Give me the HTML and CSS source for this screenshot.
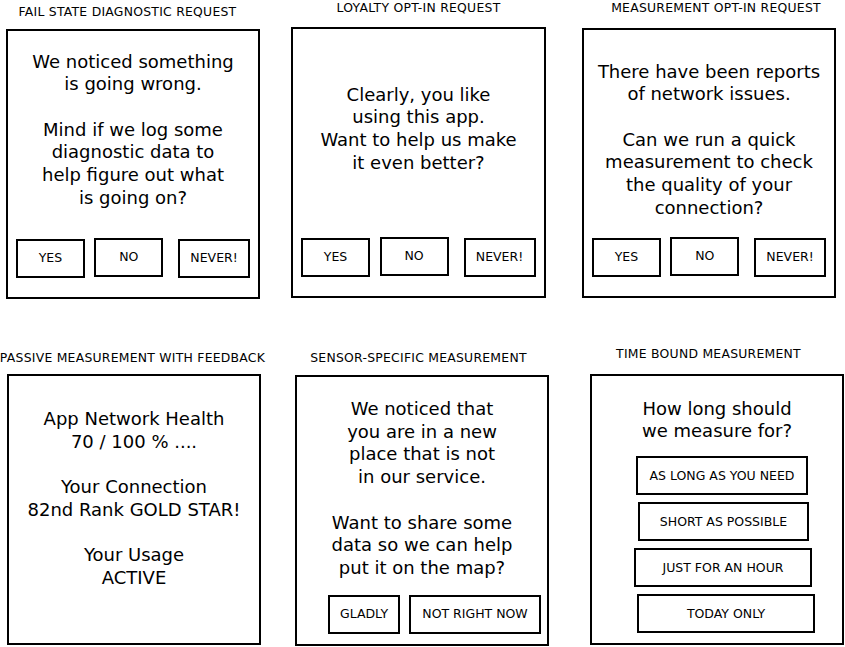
FILE: index.html
```html
<!DOCTYPE html>
<html lang="en">
<head>
    <meta charset="UTF-8">
    <meta name="viewport" content="width=device-width, initial-scale=1.0">
    <title>Opt-in request wireframes</title>
    <link rel="stylesheet" href="styles.css">
</head>
<body>
    <main class="board">
        <!-- Top row -->
        <section class="panel panel-fail">
            <h2 class="panel-title">FAIL STATE DIAGNOSTIC REQUEST</h2>
            <div class="card">
                <div class="card-text">
                    <p>We noticed something<br>is going wrong.</p>
                    <p>Mind if we log some<br>diagnostic data to<br>help figure out what<br>is going on?</p>
                </div>
                <div class="actions">
                    <button class="btn btn-yes">YES</button>
                    <button class="btn btn-no">NO</button>
                    <button class="btn btn-never">NEVER!</button>
                </div>
            </div>
        </section>

        <section class="panel panel-loyalty">
            <h2 class="panel-title">LOYALTY OPT-IN REQUEST</h2>
            <div class="card">
                <div class="card-text">
                    <p>Clearly, you like<br>using this app.<br>Want to help us make<br>it even better?</p>
                </div>
                <div class="actions">
                    <button class="btn btn-yes">YES</button>
                    <button class="btn btn-no">NO</button>
                    <button class="btn btn-never">NEVER!</button>
                </div>
            </div>
        </section>

        <section class="panel panel-measure">
            <h2 class="panel-title">MEASUREMENT OPT-IN REQUEST</h2>
            <div class="card">
                <div class="card-text">
                    <p>There have been reports<br>of network issues.</p>
                    <p>Can we run a quick<br>measurement to check<br>the quality of your<br>connection?</p>
                </div>
                <div class="actions">
                    <button class="btn btn-yes">YES</button>
                    <button class="btn btn-no">NO</button>
                    <button class="btn btn-never">NEVER!</button>
                </div>
            </div>
        </section>

        <!-- Bottom row -->
        <section class="panel panel-passive">
            <h2 class="panel-title">PASSIVE MEASUREMENT WITH FEEDBACK</h2>
            <div class="card">
                <div class="card-text">
                    <p>App Network Health<br>70 / 100 % ....</p>
                    <p>Your Connection<br>82nd Rank GOLD STAR!</p>
                    <p>Your Usage<br>ACTIVE</p>
                </div>
            </div>
        </section>

        <section class="panel panel-sensor">
            <h2 class="panel-title">SENSOR-SPECIFIC MEASUREMENT</h2>
            <div class="card">
                <div class="card-text">
                    <p>We noticed that<br>you are in a new<br>place that is not<br>in our service.</p>
                    <p>Want to share some<br>data so we can help<br>put it on the map?</p>
                </div>
                <div class="actions">
                    <button class="btn btn-gladly">GLADLY</button>
                    <button class="btn btn-later">NOT RIGHT NOW</button>
                </div>
            </div>
        </section>

        <section class="panel panel-time">
            <h2 class="panel-title">TIME BOUND MEASUREMENT</h2>
            <div class="card">
                <div class="card-text">
                    <p>How long should<br>we measure for?</p>
                </div>
                <div class="choices">
                    <button class="btn choice-long">AS LONG AS YOU NEED</button>
                    <button class="btn choice-short">SHORT AS POSSIBLE</button>
                    <button class="btn choice-hour">JUST FOR AN HOUR</button>
                    <button class="btn choice-today">TODAY ONLY</button>
                </div>
            </div>
        </section>
    </main>
</body>
</html>
```

FILE: styles.css
```css
* {
    box-sizing: border-box;
    font-family: 'DejaVu Sans', Verdana, sans-serif;
}

body {
    margin: 0;
    background-color: white;
    color: #000;
}

/* free canvas: each panel sits where it was drawn */
.board {
    position: relative;
    width: 845px;
    height: 647px;
    overflow: hidden;
}

.panel {
    position: absolute;
    width: 254px;
}

.panel-fail     { left: 6px;   top: 5px; }
.panel-loyalty  { left: 291px; top: 1px; width: 255px; }
.panel-measure  { left: 582px; top: 1px; }
.panel-passive  { left: 7px;   top: 351px; }
.panel-sensor   { left: 295px; top: 351px; }
.panel-time     { left: 590px; top: 347px; }

.panel-title {
    display: flex;
    justify-content: center;
    margin: 0;
    height: 14px;
    font-size: 12.4px;
    font-weight: normal;
    line-height: 14px;
    letter-spacing: 0.25px;
    white-space: nowrap;
}

.panel-fail .panel-title    { padding-right: 11px; }
.panel-measure .panel-title { padding-left: 14px; }
.panel-passive .panel-title { padding-right: 3px; }
.panel-sensor .panel-title  { padding-right: 7px; }
.panel-time .panel-title    { padding-right: 17px; }

.card {
    display: flex;
    flex-direction: column;
    height: 270px;
    border: 2px solid #000;
    background-color: white;
}

.panel-fail .card    { margin-top: 10px; padding: 19.5px 8px 19px; }
.panel-loyalty .card { margin-top: 12px; height: 271px; padding: 54.5px 8px 19.5px; }
.panel-measure .card { margin-top: 13px; padding: 30.5px 8px 19px; }
.panel-passive .card { margin-top: 9px;  height: 271px; padding-top: 32px; }
.panel-sensor .card  { margin-top: 10px; height: 271px; padding: 21px 6px 10.5px 31px; }
.panel-time .card    { margin-top: 13px; height: 271px; padding-top: 21.5px; }

.card-text {
    font-size: 18px;
    line-height: 22.7px;
    text-align: center;
}

.panel-sensor .card-text {
    margin-left: -25px;
}

.card-text p {
    margin: 0 0 22.7px;
}

.card-text p:last-child {
    margin-bottom: 0;
}

.actions {
    display: flex;
    align-items: flex-end;
    margin-top: auto;
}

.btn {
    height: 39px;
    padding: 0;
    border: 2px solid #000;
    background-color: white;
    color: #000;
    font-size: 12.5px;
    line-height: 1;
    white-space: nowrap;
    cursor: pointer;
}

.btn-yes   { width: 69px; }
.btn-no    { width: 69px; margin: 0 15px 1px 9.5px; }
.btn-never { width: 72px; }

.btn-gladly { width: 72px; margin-right: 9px; }
.btn-later  { width: 132px; }

.choices {
    display: flex;
    flex-direction: column;
    align-items: flex-start;
    gap: 7px;
    margin-top: 13.5px;
}

.choice-long  { width: 172px; margin-left: 44px; }
.choice-short { width: 171px; margin-left: 46px; }
.choice-hour  { width: 178px; margin-left: 42px; }
.choice-today { width: 178px; margin-left: 45px; }
```
